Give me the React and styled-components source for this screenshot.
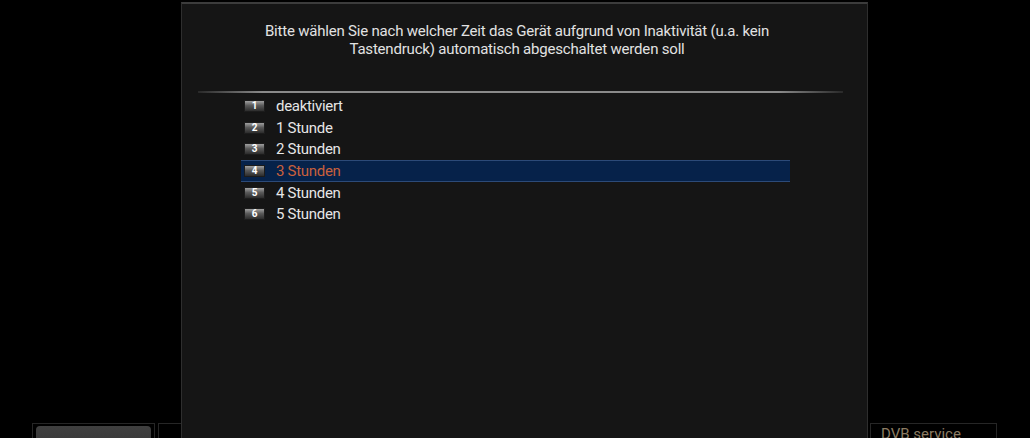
import React from "react";
import { styled, createGlobalStyle } from "styled-components";

const GlobalStyle = createGlobalStyle`
  html, body {
    margin: 0;
    padding: 0;
    background: #000;
    overflow: hidden;
  }
  body {
    font-family: Roboto, "Liberation Sans", sans-serif;
  }
`;

const options = [
  "deaktiviert",
  "1 Stunde",
  "2 Stunden",
  "3 Stunden",
  "4 Stunden",
  "5 Stunden",
];

const App = () => {
  const selected = 3;

  return (
    <Screen>
      <GlobalStyle />
      <Footer>
        <LeftGroup>
          <FooterBox $width={123}>
            <GreyButton />
          </FooterBox>
          <FooterBox $width={25} />
        </LeftGroup>
        <FooterBox $width={127}>
          <ServiceLabel>DVB service</ServiceLabel>
        </FooterBox>
      </Footer>

      <Dialog>
        <Title>
          Bitte wählen Sie nach welcher Zeit das Gerät aufgrund von Inaktivität
          (u.a. kein
          <br />
          Tastendruck) automatisch abgeschaltet werden soll
        </Title>
        <Separator />
        <List>
          {options.map((label, i) => (
            <Row key={label} $active={i === selected}>
              <Key>{i + 1}</Key>
              <Label $active={i === selected}>{label}</Label>
            </Row>
          ))}
        </List>
      </Dialog>
    </Screen>
  );
};

const Screen = styled.div`
  position: relative;
  width: 1030px;
  height: 438px;
  background: #000;
  overflow: hidden;
`;

const Footer = styled.div`
  display: flex;
  justify-content: space-between;
  align-items: flex-start;
  padding: 423px 33px 0 32px;
`;

const LeftGroup = styled.div`
  display: flex;
  gap: 3px;
`;

const FooterBox = styled.div`
  box-sizing: border-box;
  width: ${(p) => p.$width}px;
  height: 30px;
  border: 1px solid #262626;
  padding: 2px 3px;
`;

const GreyButton = styled.div`
  height: 24px;
  border-radius: 4px;
  background: linear-gradient(#404040, #353535);
`;

const ServiceLabel = styled.div`
  padding-left: 7px;
  font-size: 15px;
  line-height: 16px;
  color: #8c7c62;
`;

const Dialog = styled.div`
  position: absolute;
  left: 181px;
  top: 2px;
  box-sizing: border-box;
  width: 687px;
  height: 450px;
  background: #151515;
  border: 1px solid #2e2e2e;
  border-top: 2px solid #3c3c3c;
  display: flex;
  flex-direction: column;
`;

const Title = styled.div`
  padding: 18px 15px 0 0;
  text-align: center;
  font-size: 15px;
  line-height: 18px;
  letter-spacing: -0.2px;
  color: #e2e2e2;
`;

const Separator = styled.div`
  margin: 33px 24px 0 16px;
  height: 2px;
  background: linear-gradient(
    90deg,
    rgba(120, 120, 120, 0.2),
    #8a8a8a 10%,
    #8a8a8a 90%,
    rgba(120, 120, 120, 0.2)
  );
`;

const List = styled.div`
  display: flex;
  flex-direction: column;
  margin: 2.5px 0 0 59px;
  width: 549px;
`;

const Row = styled.div`
  box-sizing: border-box;
  height: 21.6px;
  display: flex;
  align-items: center;
  gap: 11px;
  padding-left: 3px;
  background: ${(p) => (p.$active ? "#06224a" : "transparent")};
  border-top: 1px solid ${(p) => (p.$active ? "#2c4a78" : "transparent")};
  border-bottom: 1px solid ${(p) => (p.$active ? "#2c4a78" : "transparent")};
`;

const Key = styled.div`
  box-sizing: border-box;
  width: 21px;
  height: 12px;
  display: flex;
  align-items: center;
  justify-content: center;
  background: linear-gradient(#a0a0a0, #5a5a5a 45%, #2c2c2c);
  border: 1px solid #1c1c1c;
  font-size: 10px;
  font-weight: 700;
  line-height: 10px;
  color: #fff;
`;

const Label = styled.div`
  font-size: 15px;
  letter-spacing: -0.3px;
  color: ${(p) => (p.$active ? "#c9603c" : "#e6e6e6")};
`;

export default App;
